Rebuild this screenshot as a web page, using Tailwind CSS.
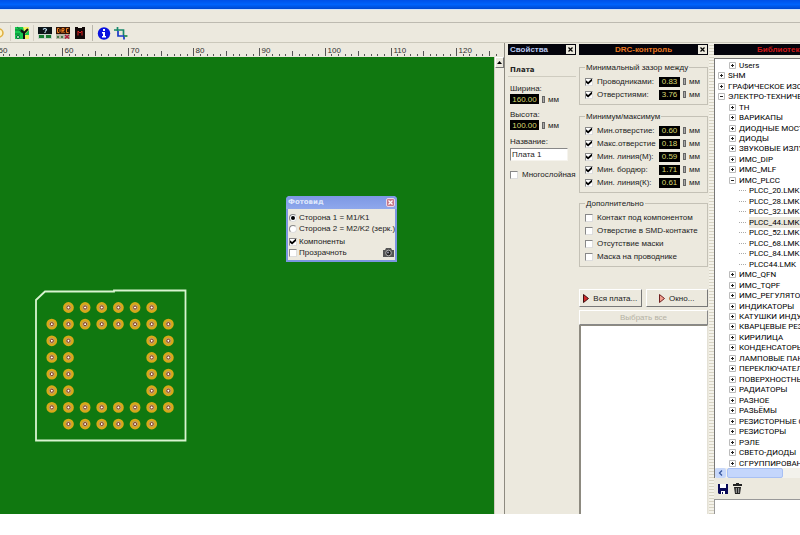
<!DOCTYPE html>
<html lang="ru">
<head>
  <meta charset="UTF-8">
  <title>Sprint-Layout</title>
  <script src="https://cdn.jsdelivr.net/npm/@tailwindcss/browser@4"></script>
</head>
<body class="bg-white font-['Liberation_Sans',sans-serif] text-[8px] leading-[11px] text-[#222]">

<div class="h-screen flex flex-col pb-[21px] overflow-hidden">

  <!-- Заголовок и меню -->
  <header class="shrink-0 bg-[#ece9de]">
    <div class="h-[9px] bg-linear-to-b from-[#0050e8] via-[#0062fc] to-[#0048d0]"></div>
    <div class="h-[14px] border-t border-[#cfe0fa] border-b border-b-[#bdbab0]"></div>
    <nav class="h-5 flex items-center border-b border-[#cbc8bb]" aria-label="Панель инструментов">
      <button class="w-[10px] h-4" aria-label="Контакт">
        <svg class="w-[10px] h-4" viewBox="0 0 10 16"><circle cx="-1" cy="8" r="4" fill="#fff3c0" stroke="#e0b040" stroke-width="1.5"/></svg>
      </button>
      <span class="w-px h-4 bg-[#d5d0c4]"></span>
      <button class="ml-1 w-[14px] h-[14px]" aria-label="Фотовид">
        <svg viewBox="0 0 14 14"><path fill="#18c850" d="M0 1h14v12H0z"/><path fill="#f6f060" d="M8 1h6v3l-4 4zM10 9h4v4h-4z"/><path stroke="#0a7a30" fill="none" d="M0 4h4l3 3M2 1l5 4M0 8h5"/><path stroke="#111" stroke-width="2" fill="none" d="M13 3l-4 4-3-3M9 7v6"/><circle cx="3" cy="11" r="1.5" fill="#e8ffe8" stroke="#063"/></svg>
      </button>
      <span class="ml-1 w-px h-4 bg-[#d5d0c4]"></span>
      <button class="ml-1 w-[14px] h-[14px]" aria-label="Свойства">
        <svg viewBox="0 0 14 14"><path fill="#c8d4cc" d="M0 1h14v12H0z"/><path fill="#0c1418" d="M0 1h14v7H0z"/><path stroke="#c8e8f8" stroke-width="1.2" fill="none" d="M5 3.5q2-2 3.500 0q0 1-1.500 2M7 6v1"/><path fill="#167a30" d="M1 9h5v3H1zM8 9h5v3H8z"/></svg>
      </button>
      <button class="ml-1 w-[14px] h-[14px]" aria-label="DRC">
        <svg viewBox="0 0 14 14"><path fill="#b8b8a8" d="M0 1h14v12H0z"/><path fill="#301408" d="M0 1h14v7H0z"/><path stroke="#f08020" fill="none" d="M1.500 2.500v4h1.500l1-1v-2l-1-1zM6 7V2.500h2v2H6l2.500 2.500M12.500 2.500h-2v4h2"/><path fill="#487848" d="M1 10h2v2H1zM5 10h2v2H5z"/><path stroke="#b01838" stroke-width="1.500" d="M9 9l4 3.500M13 9l-4 3.500"/></svg>
      </button>
      <button class="ml-[5px] w-[10px] h-[14px]" aria-label="Библиотека">
        <svg viewBox="0 0 10 14"><path fill="#100808" d="M0 1h3v1h4V1h3v12H0z"/><path stroke="#e02020" fill="none" d="M3 9.500V5l2 2 2-2v4.500"/></svg>
      </button>
      <span class="ml-[7px] w-px h-4 bg-[#bab7ac]"></span>
      <button class="ml-1 w-[14px] h-[14px]" aria-label="Информация">
        <svg viewBox="0 0 14 14"><circle cx="7" cy="7.500" r="6.200" fill="#0a12e0"/><path fill="#fff" d="M6 3h2v2H6zM5 6h3v4h1v1.500H5V10h1V7.500H5z"/></svg>
      </button>
      <button class="ml-[3px] w-[14px] h-[14px]" aria-label="Обрезка">
        <svg viewBox="0 0 14 14" fill="none" stroke-width="1.700"><path stroke="#18886c" d="M0 4h9.500v5M3.500 1v4"/><path stroke="#1838c8" d="M4 5v5h9M10 9v4.500"/><path stroke="#38a050" d="M10 10h3.500"/></svg>
      </button>
    </nav>
  </header>

  <main class="flex-1 min-h-0 flex bg-[#ece9de]">

    <!-- Рабочее поле -->
    <section class="flex-1 min-w-0 flex flex-col border-r border-[#8d8a80]">
      <svg id="ruler" class="h-[14px] w-full shrink-0"></svg>
      <div class="flex-1 min-h-0 flex">
        <div class="relative flex-1 min-w-0 bg-[#107810] overflow-hidden">
          <svg id="board" class="w-full h-full">
            <path d="M36 243V243L45 234.500H114V233.500H185.500V383.500H36Z" fill="none" stroke="#d8f4d0" stroke-width="1.800"/>
          </svg>

          <div class="absolute left-[286px] top-[139px] w-[111px] bg-[#ece9de] border-2 border-t-0 border-[#7b96e0] rounded-t-sm">
            <div class="h-[13px] -mx-[2px] px-[2px] flex items-center justify-between rounded-t-sm bg-linear-to-b from-[#7d98e4] to-[#8fa8ec]">
              <h2 class="font-['DejaVu_Sans',sans-serif] font-bold text-[7px] text-[#dfe8fc]">Фотовид</h2>
              <button class="w-[9px] h-[9px] bg-[#c87888] border border-[#e8d8e8] rounded-xs" aria-label="Закрыть">
                <svg viewBox="0 0 7 7"><path d="M1.500 1.500l4 4M5.500 1.500l-4 4" stroke="#fff" stroke-width="1.200"/></svg>
              </button>
            </div>
            <div class="px-px pt-[3px] pb-[2px] whitespace-nowrap">
              <label class="flex items-center gap-[2px] h-[11px]"><input type="radio" name="side" checked class="appearance-none w-2 h-2 shrink-0 rounded-full bg-white border border-[#888] border-r-[#ddd] border-b-[#ddd] grid place-items-center checked:before:content-[''] checked:before:w-[4px] checked:before:h-[4px] checked:before:rounded-full checked:before:bg-black">Сторона 1 = M1/K1</label>
              <label class="flex items-center gap-[2px] h-[11px]"><input type="radio" name="side" class="appearance-none w-2 h-2 shrink-0 rounded-full bg-white border border-[#888] border-r-[#ddd] border-b-[#ddd]">Сторона 2 = M2/K2 (зерк.)</label>
              <label class="mt-[2px] flex items-center gap-[2px] h-[11px]"><input type="checkbox" checked class="appearance-none w-2 h-2 bg-white border border-[#888] border-r-[#ddd] border-b-[#ddd] checked:before:content-[''] checked:before:block checked:before:w-[6px] checked:before:h-[6px] checked:before:bg-black checked:before:[clip-path:polygon(0_30%,35%_60%,100%_0,100%_40%,35%_100%,0_70%)]">Компоненты</label>
              <div class="flex items-center justify-between">
                <label class="flex items-center gap-[2px] h-[11px]"><input type="checkbox" class="appearance-none w-2 h-2 bg-white border border-[#888] border-r-[#ddd] border-b-[#ddd]">Прозрачноть</label>
                <button class="w-[11px] h-[9px]" aria-label="Снимок">
                  <svg viewBox="0 0 11 9"><path fill="#555" d="M0 2h2l1-2h5l1 2h2v7H0z"/><circle cx="5.500" cy="5" r="2.800" fill="#222" stroke="#ccc" stroke-width=".8"/><circle cx="5" cy="4.500" r="1" fill="#99a"/></svg>
                </button>
              </div>
            </div>
          </div>
        </div>
        <div class="w-[10px] bg-[#f0ede4] border-l border-[#d0ccc0]">
          <button class="w-full h-[11px] grid place-items-center bg-[#ece9de] border border-white border-r-[#777] border-b-[#777]" aria-label="Вверх">
            <svg class="w-[5px] h-[3px]" viewBox="0 0 5 3"><path d="M2.500 0L5 3H0z"/></svg>
          </button>
        </div>
      </div>
    </section>

    <!-- Свойства -->
    <section class="w-[73px] shrink-0 pt-px pl-[3px]">
      <div class="h-[11px] mr-[2px] flex items-center justify-between bg-[#04040c] pl-[2px]">
        <h2 class="font-bold text-[#b8c8f0]">Свойства</h2>
        <button class="w-[9px] h-[9px] mr-px bg-[#ece9de]" aria-label="Закрыть свойства">
          <svg viewBox="0 0 9 9"><path d="M2.500 2.500l4 4M6.500 2.500l-4 4" stroke="#000" stroke-width="1.200"/></svg>
        </button>
      </div>
      <h3 class="mt-[10px] mr-[2px] pl-[2px] border-b border-[#cfccc0] font-['DejaVu_Sans',sans-serif] font-bold text-[7px]">Плата</h3>
      <div class="pl-[2px] mt-[6px]">
        <label for="w" class="block">Ширина:</label>
        <div class="h-[10px] flex items-center"><input id="w" value="160.00" class="w-[29px] h-[10px] bg-black text-[#d8d870] text-center"><i class="mx-[3px] w-[3px] h-[7px] border border-[#666] bg-[#aaa]"></i>мм</div>
        <label for="h" class="mt-[5px] block">Высота:</label>
        <div class="h-[10px] flex items-center"><input id="h" value="100.00" class="w-[29px] h-[10px] bg-black text-[#d8d870] text-center"><i class="mx-[3px] w-[3px] h-[7px] border border-[#666] bg-[#aaa]"></i>мм</div>
        <label for="name" class="mt-[6px] block">Название:</label>
        <input id="name" value="Плата 1" class="block mt-px w-[58px] h-[13px] px-px bg-white border border-[#888] border-r-[#f6f4ee] border-b-[#f6f4ee]">
        <label class="mt-[7px] flex items-center gap-1 h-[13px] whitespace-nowrap"><input type="checkbox" class="appearance-none w-2 h-2 shrink-0 bg-white border border-[#888] border-r-[#ddd] border-b-[#ddd]">Многослойная</label>
      </div>
    </section>

    <!-- DRC-контроль -->
    <section class="w-[131px] shrink-0 pt-px px-px flex flex-col">
      <div class="h-[11px] flex items-center bg-[#04040c] pl-[10px]">
        <h2 class="flex-1 text-center font-bold text-[#e87820]">DRC-контроль</h2>
        <button class="w-[9px] h-[9px] mr-px bg-[#ece9de]" aria-label="Закрыть DRC">
          <svg viewBox="0 0 9 9"><path d="M2.500 2.500l4 4M6.500 2.500l-4 4" stroke="#000" stroke-width="1.200"/></svg>
        </button>
      </div>
      <fieldset id="gap" class="min-w-0 mt-[7px] border border-[#c4c1b6] px-[5px] pt-[2px] pb-[3px]">
        <legend class="px-px">Минимальный зазор между</legend>
      </fieldset>
      <fieldset id="minmax" class="min-w-0 mt-[6px] border border-[#c4c1b6] px-[5px] pt-[2px] pb-[3px]">
        <legend class="px-px">Минимум/максимум</legend>
      </fieldset>
      <fieldset id="extra" class="min-w-0 mt-[5px] border border-[#c4c1b6] px-[5px] pt-[2px] pb-[3px]">
        <legend class="px-px">Дополнительно</legend>
      </fieldset>
      <div class="mt-[22px] grid grid-cols-2 gap-1">
        <button class="h-[18px] flex items-center justify-center gap-1 border border-white border-r-[#777] border-b-[#777] whitespace-nowrap"><svg class="w-[6px] h-[9px]" viewBox="0 0 6 9"><path d="M.5.500L5.500 4.500.5 8.500z" fill="#d02828" stroke="#401010"/></svg>Вся плата...</button>
        <button class="h-[18px] flex items-center justify-center gap-1 border border-white border-r-[#777] border-b-[#777] whitespace-nowrap"><svg class="w-[6px] h-[9px]" viewBox="0 0 6 9"><path d="M.5.500L5.500 4.500.5 8.500z" fill="#f0a090" stroke="#702020"/></svg>Окно...</button>
      </div>
      <button disabled class="mt-[3px] h-[15px] shrink-0 border border-white border-r-[#888] border-b-[#888] text-[#b4b1a4]">Выбрать все</button>
      <div class="flex-1 bg-white border border-l-2 border-[#8d8a80] border-r-[#e4e1d6] border-b-0"></div>
    </section>

    <div class="w-[5px] shrink-0 bg-[repeating-linear-gradient(0deg,#d8d4c4_0_1px,#f4f2ea_1px_3px)]"></div>

    <!-- Библиотека -->
    <section class="w-[86px] shrink-0 pt-px flex flex-col overflow-hidden">
      <h2 class="h-[11px] shrink-0 bg-[#04040c] pl-[43px] whitespace-nowrap font-bold text-[#d01818]">Библиотека</h2>
      <div class="flex-1 min-h-0 mt-[3px] flex flex-col bg-white border-l border-t border-[#777]">
        <ul id="tree" class="flex-1 min-h-0 flex flex-col pt-px text-black font-[Roboto,sans-serif]"></ul>
        <div class="h-[10px] shrink-0 flex bg-[#f3f2ec]">
          <button class="w-[11px] grid place-items-center bg-[#c8d8fa] rounded-xs" aria-label="Влево"><svg class="w-[5px] h-[6px]" viewBox="0 0 5 6"><path d="M4 .5L1.500 3 4 5.500" fill="none" stroke="#3858a0" stroke-width="1.300"/></svg></button>
          <div class="ml-px w-[56px] bg-[#c4d6fc] border border-[#a8c0f4] rounded-xs"></div>
        </div>
      </div>
      <div class="h-[21px] shrink-0 flex items-center gap-[5px] pl-[4px]">
        <button class="w-[10px] h-[10px]" aria-label="Сохранить"><svg viewBox="0 0 10 10"><path fill="#0a0a58" d="M0 0h10v10H1L0 9z"/><path fill="#fff" d="M2 0h6v4H2zM3 7h4v3H3z"/><path fill="#0a0a58" d="M4 8h1v2H4z"/></svg></button>
        <button class="w-[9px] h-[11px]" aria-label="Удалить"><svg viewBox="0 0 9 11"><path fill="#222" d="M3 0h3v1h3v2H0V1h3zM1 4h7l-1 7H2z"/><path stroke="#ccc" stroke-width=".8" d="M3.300 5v5M5.700 5v5"/></svg></button>
      </div>
      <div class="h-[15px] shrink-0 bg-white border-l border-t border-[#999]"></div>
    </section>
  </main>
</div>

<script>
const NS = "http://www.w3.org/2000/svg";

function addSvg(parent, tag, attrs, text) {
  const el = document.createElementNS(NS, tag);
  for (const k in attrs) el.setAttribute(k, attrs[k]);
  if (text) el.textContent = text;
  parent.appendChild(el);
}

// линейка: 10 мм = 65.7 px
const ruler = document.getElementById("ruler");
for (let mm = 50; mm <= 126; mm++) {
  const x = Math.round(62 + (mm - 60) * 6.57) + 0.5;
  const top = mm % 10 === 0 ? 5 : mm % 5 === 0 ? 8 : 11;
  addSvg(ruler, "line", { x1: x, x2: x, y1: top, y2: 13, stroke: "#555" });
  if (mm % 10 === 0) addSvg(ruler, "text", { x: x + 2, y: 10, "font-size": 8, fill: "#333" }, String(mm));
}

// контактные площадки PLCC-44
const board = document.getElementById("board");
for (let r = 0; r < 8; r++) {
  for (let c = 0; c < 8; c++) {
    const corner = (r === 0 || r === 7) && (c === 0 || c === 7);
    const inside = r > 1 && r < 6 && c > 1 && c < 6;
    if (corner || inside) continue;
    const cx = 51.8 + c * 16.65, cy = 250.5 + r * 16.65;
    addSvg(board, "circle", { cx, cy, r: 4.2, fill: "#c0a060", stroke: "#d8a818", "stroke-width": 2.4 });
    addSvg(board, "circle", { cx, cy, r: 1.5, fill: "#fff", stroke: "#803818", "stroke-width": 1 });
  }
}

// строки DRC
function addRow(id, text, value) {
  const row = document.createElement("div");
  row.className = "h-[13px] flex items-center";
  row.innerHTML = `<label class="flex-1 min-w-0 flex items-center gap-1 whitespace-nowrap"><input type="checkbox" class="appearance-none w-2 h-2 shrink-0 bg-white border border-[#888] border-r-[#ddd] border-b-[#ddd] checked:before:content-[''] checked:before:block checked:before:w-[6px] checked:before:h-[6px] checked:before:bg-black checked:before:[clip-path:polygon(0_30%,35%_60%,100%_0,100%_40%,35%_100%,0_70%)]" ${value ? "checked" : ""}>${text}</label>` +
    (value ? `<input value="${value}" aria-label="${text}" class="w-[21px] h-[10px] shrink-0 bg-black text-[#d8d870] text-center"><i class="mx-[3px] w-[3px] h-[7px] border border-[#666] bg-[#aaa]"></i><span class="w-[13px]">мм</span>` : "");
  document.getElementById(id).appendChild(row);
}
addRow("gap", "Проводниками:", "0.83");
addRow("gap", "Отверстиями:", "3.76");
addRow("minmax", "Мин.отверстие:", "0.60");
addRow("minmax", "Макс.отверстие", "0.18");
addRow("minmax", "Мин. линия(М):", "0.59");
addRow("minmax", "Мин. бордюр:", "1.71");
addRow("minmax", "Мин. линия(К):", "0.61");
addRow("extra", "Контакт под компонентом");
addRow("extra", "Отверстие в SMD-контакте");
addRow("extra", "Отсутствие маски");
addRow("extra", "Маска на проводнике");

// дерево библиотеки: [уровень, имя, знак]
const nodes = [
  [1, "Users", "+"], [0, "SHM", "+"], [0, "ГРАФИЧЕСКОЕ ИЗОБРАЖЕНИЕ", "+"], [0, "ЭЛЕКТРО-ТЕХНИЧЕСКИЕ", "-"],
  [1, "TH", "+"], [1, "ВАРИКАПЫ", "+"], [1, "ДИОДНЫЕ МОСТЫ", "+"], [1, "ДИОДЫ", "+"], [1, "ЗВУКОВЫЕ ИЗЛУЧАТЕЛИ", "+"],
  [1, "ИМС_DIP", "+"], [1, "ИМС_MLF", "+"], [1, "ИМС_PLCC", "-"],
  [2, "PLCC_20.LMK"], [2, "PLCC_28.LMK"], [2, "PLCC_32.LMK"], [2, "PLCC_44.LMK"],
  [2, "PLCC_52.LMK"], [2, "PLCC_68.LMK"], [2, "PLCC_84.LMK"], [2, "PLCC44.LMK"],
  [1, "ИМС_QFN", "+"], [1, "ИМС_TQPF", "+"], [1, "ИМС_РЕГУЛЯТОРЫ", "+"], [1, "ИНДИКАТОРЫ", "+"],
  [1, "КАТУШКИ ИНДУКТИВНОСТИ", "+"], [1, "КВАРЦЕВЫЕ РЕЗОНАТОРЫ", "+"], [1, "КИРИЛИЦА", "+"], [1, "КОНДЕНСАТОРЫ", "+"],
  [1, "ЛАМПОВЫЕ ПАНЕЛИ", "+"], [1, "ПЕРЕКЛЮЧАТЕЛИ", "+"], [1, "ПОВЕРХНОСТНЫЕ", "+"], [1, "РАДИАТОРЫ", "+"],
  [1, "РАЗНОЕ", "+"], [1, "РАЗЬЁМЫ", "+"], [1, "РЕЗИСТОРНЫЕ СБОРКИ", "+"], [1, "РЕЗИСТОРЫ", "+"],
  [1, "РЭЛЕ", "+"], [1, "СВЕТО-ДИОДЫ", "+"], [1, "СГРУППИРОВАННЫЕ", "+"]
];
const indent = ["pl-[3px]", "pl-[14px]", "pl-[24px]"];
const tree = document.getElementById("tree");
nodes.forEach(([level, name, sign]) => {
  const li = document.createElement("li");
  li.className = "flex-1 min-h-0 flex items-center whitespace-nowrap " + indent[level];
  const mark = sign
    ? `<svg class="w-[7px] h-[7px] mr-[3px] shrink-0" viewBox="0 0 7 7"><path d="M.5.500h6v6h-6z" fill="#fff" stroke="#bbb"/><path d="M2 3.500h3${sign === "+" ? "M3.500 2v3" : ""}" stroke="#222"/></svg>`
    : `<i class="w-[7px] mr-[3px] shrink-0 border-t border-dotted border-[#aaa]"></i>`;
  li.innerHTML = mark + `<span class="${name === "PLCC_44.LMK" ? "bg-[#ece9de]" : ""}">${name}</span>`;
  tree.appendChild(li);
});
</script>
</body>
</html>
